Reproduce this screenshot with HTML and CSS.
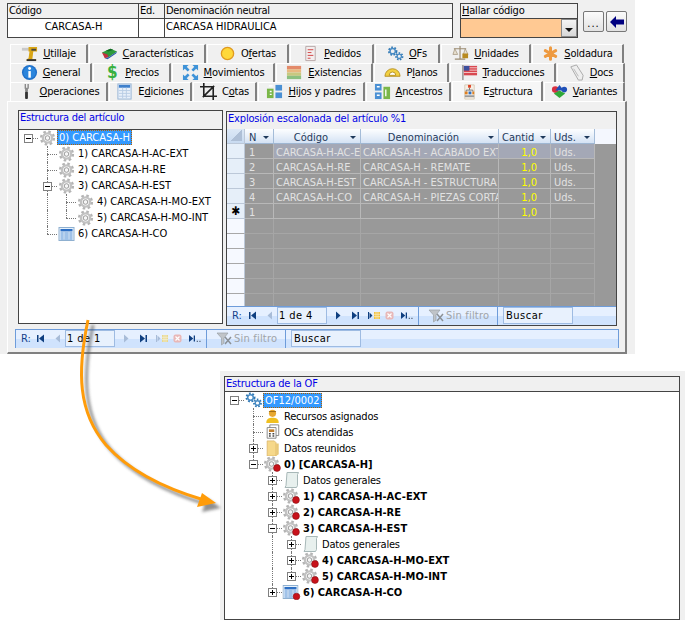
FILE: index.html
```html
<!DOCTYPE html>
<html lang="es">
<head>
<meta charset="utf-8">
<title>Estructura</title>
<link rel="stylesheet" href="styles.css">
</head>
<body>
<svg class="defs" aria-hidden="true">
  <symbol id="gear" viewBox="0 0 16 16">
    <circle cx="8" cy="8" r="6.3" fill="none" stroke="#b4b4b4" stroke-width="2.6" stroke-dasharray="2.5 2.45"/>
    <circle cx="8" cy="8" r="4.6" fill="none" stroke="#c2c2c2" stroke-width="2.4"/>
    <circle cx="8" cy="8" r="2.3" fill="#f6f6f6" stroke="#9a9a9a" stroke-width="1"/>
  </symbol>
  <symbol id="geardot" viewBox="0 0 18 16">
    <use href="#gear" x="0" y="0" width="16" height="16"/>
    <circle cx="13.5" cy="12" r="3.4" fill="#c8111a" stroke="#8e1014" stroke-width=".6"/>
  </symbol>
  <symbol id="table" viewBox="0 0 16 16">
    <rect x=".5" y="1.5" width="15" height="13" fill="#e6f1fb" stroke="#8fb0d0"/>
    <rect x="2" y="3" width="12" height="2.4" fill="#2d6fc4"/>
    <path d="M2 7h12M2 9h12M2 11h12M2 13h12" stroke="#5a93d6"/>
    <path d="M5.5 6v7.500M10.500 6v7.500" stroke="#cfe0f2"/>
  </symbol>
  <symbol id="tabledot" viewBox="0 0 18 16">
    <use href="#table" x="0" y="0" width="16" height="16"/>
    <circle cx="14" cy="12.500" r="3.300" fill="#c8111a" stroke="#8e1014" stroke-width=".6"/>
  </symbol>
  <symbol id="bluegears" viewBox="0 0 18 16">
    <circle cx="6" cy="5.500" r="3.800" fill="none" stroke="#2f78b4" stroke-width="2.400" stroke-dasharray="1.700 1.500"/>
    <circle cx="6" cy="5.500" r="2.800" fill="none" stroke="#4a8cc4" stroke-width="1.500"/>
    <circle cx="13" cy="11" r="3.300" fill="none" stroke="#2f78b4" stroke-width="2.200" stroke-dasharray="1.500 1.400"/>
    <circle cx="13" cy="11" r="2.300" fill="none" stroke="#4a8cc4" stroke-width="1.400"/>
  </symbol>
  <symbol id="paper" viewBox="0 0 16 16">
    <path d="M3.500 .5h11.500l-1 2v11l-1 2H1.500l1-2z" fill="#e8f0ee" stroke="#a8b8b8"/>
  </symbol>
  <symbol id="first" viewBox="0 0 9 9"><path d="M1 1v7h1.500V1zM8 .5L3 4.500l5 4z" fill="#0f3f80"/></symbol>
  <symbol id="prev" viewBox="0 0 9 9"><path d="M7 .5L2.500 4.500 7 8.500z" fill="#a8bcd8"/></symbol>
  <symbol id="next" viewBox="0 0 9 9"><path d="M2 .5L6.500 4.500 2 8.500z" fill="#0f3f80"/></symbol>
  <symbol id="nextoff" viewBox="0 0 9 9"><path d="M2 .5L6.500 4.500 2 8.500z" fill="#a8bcd8"/></symbol>
  <symbol id="last" viewBox="0 0 9 9"><path d="M1 .5l5 4-5 4zM6.500 1v7H8V1z" fill="#0f3f80"/></symbol>
  <symbol id="newrec" viewBox="0 0 12 9"><path d="M0 1v7h1V1zM1.500 1.500l3 3-3 3z" fill="#a8bcd8"/><rect x="6" y="1" width="6" height="7" fill="#e8d890"/><path d="M8 1v7M10 1v7M6 3.300h6M6 5.600h6" stroke="#f4f0d8" stroke-width=".7"/></symbol>
  <symbol id="newrecon" viewBox="0 0 12 9"><path d="M0 1v7h1V1zM1.500 1.500l3 3-3 3z" fill="#0f3f80"/><rect x="6" y="1" width="6" height="7" fill="#f0c040"/><path d="M8 1v7M10 1v7M6 3.300h6M6 5.600h6" stroke="#fbeec0" stroke-width=".7"/></symbol>
  <symbol id="del" viewBox="0 0 9 9"><rect x=".5" y=".5" width="8" height="8" rx="2" fill="#e8b8b8"/><path d="M2.500 2.500l4 4M6.500 2.500l-4 4" stroke="#fff" stroke-width="1.200"/></symbol>
  <symbol id="search" viewBox="0 0 14 9"><path d="M0 .5l5 4-5 4zM5.500 1v7H7V1z" fill="#0f3f80"/><path d="M9 7h1.500v1.500H9zM12 7h1.500v1.500H12z" fill="#5a6a80"/></symbol>
  <symbol id="funnel" viewBox="0 0 18 14"><path d="M1 1h11L8 6v5L5.500 13V6z" fill="#c0c4c8" stroke="#9aa0a6" stroke-width=".7"/><path d="M9 5l6 7M15 5l-6 7" stroke="#8a9096" stroke-width="1.500"/></symbol>
</svg>

<main class="canvas">
  <section class="win win-top">
    <header class="topbar">
      <div class="idbox">
        <div class="idrow idlabels">
          <div class="c-cod">Código</div>
          <div class="c-ed">Ed.</div>
          <div class="c-den">Denominación neutral</div>
        </div>
        <div class="idrow idvalues">
          <div class="c-cod center">CARCASA-H</div>
          <div class="c-ed"></div>
          <div class="c-den">CARCASA HIDRAULICA</div>
        </div>
      </div>
      <div class="findbox">
        <div class="findlabel"><u>H</u>allar código</div>
        <div class="findfield">
          <span class="findinput"></span>
          <span class="combo"><svg width="8" height="4" viewBox="0 0 8 4"><path d="M0 0h8L4 4z" fill="#111"/></svg></span>
        </div>
      </div>
      <button class="btn btn-dots" type="button">...</button>
      <button class="btn" type="button" aria-label="Volver"><svg width="14" height="12" viewBox="0 0 14 12"><path d="M0 6l6-6v3.500h8v5H6V12z" fill="#000080"/></svg></button>
    </header>

    <nav class="tabs">
      <div class="tabrow">
        <a class="tab w-utillaje"><svg class="ti" viewBox="0 0 18 18"><path d="M1 3h9v3H1z" fill="#c9c9c9"/><path d="M8 2h9v5h-4l-1 8h4v2H6v-2l2-1 1-7H8z" fill="#d9a514"/><path d="M6 15h10v2H6z" fill="#333"/><path d="M11 4h5v2h-5z" fill="#444"/></svg><span><u>U</u>tillaje</span></a>
        <a class="tab w-caract"><svg class="ti" viewBox="0 0 18 18"><path d="M1 8l9-4 7 3-9 6z" fill="#2d9a3a"/><path d="M1 8l3 6 4-1-1-3z" fill="#c03040"/><path d="M4 14l4-1 9-6-1 2-9 6z" fill="#2a5aa8"/><path d="M5 6l5-2 3 1-5 2z" fill="#136b24"/></svg><span><u>C</u>aracterísticas</span></a>
        <a class="tab w-ofertas"><svg class="ti" viewBox="0 0 18 18"><circle cx="9" cy="9" r="6.500" fill="#ffd83a" stroke="#e09a20" stroke-width="1.400"/></svg><span>O<u>f</u>ertas</span></a>
        <a class="tab w-pedidos"><svg class="ti" viewBox="0 0 18 18"><path d="M4 1.500h10v15H4z" fill="#f3eeee" stroke="#b8a8a8"/><path d="M6 5h6M6 8h4M6 11h6M6 14h3" stroke="#d04040"/></svg><span><u>P</u>edidos</span></a>
        <a class="tab w-ofs"><svg class="ti" viewBox="0 0 18 16"><use href="#bluegears"/></svg><span><u>O</u>Fs</span></a>
        <a class="tab w-unidades"><svg class="ti" viewBox="0 0 18 18"><path d="M8.500 1v14M3 15h11M2 4h13" stroke="#9a8a70" stroke-width="1.200"/><path d="M3 4L1 10h5zM14 4l-2 6h5z" fill="#e8e0d0" stroke="#9a8a70" stroke-width=".7"/><rect x="11" y="9" width="6" height="5" fill="#b88a20"/></svg><span><u>U</u>nidades</span></a>
        <a class="tab w-soldadura"><svg class="ti" viewBox="0 0 18 18"><path d="M9 9V3M9 9l5.500-3M9 9l5.500 3M9 9v6M9 9l-5.500 3M9 9L3.500 6" stroke="#ee9a40" stroke-width="3.200" stroke-linecap="round"/></svg><span><u>S</u>oldadura</span></a>
      </div>
      <div class="tabrow">
        <a class="tab w-general"><svg class="ti" viewBox="0 0 18 18"><circle cx="9" cy="9" r="8" fill="#1f6fc8"/><circle cx="9" cy="9" r="6.500" fill="#2b85dc"/><rect x="7.800" y="7.500" width="2.600" height="7" fill="#fff"/><circle cx="9.100" cy="4.800" r="1.500" fill="#fff"/></svg><span><u>G</u>eneral</span></a>
        <a class="tab w-precios"><span class="dollar">$</span><span><u>P</u>recios</span></a>
        <a class="tab w-movim"><svg class="ti" viewBox="0 0 18 18"><path d="M1 1h6L5 3l3 3-2 2-3-3-2 2zM17 1v6l-2-2-3 3-2-2 3-3-2-2zM1 17v-6l2 2 3-3 2 2-3 3 2 2zM17 17h-6l2-2-3-3 2-2 3 3 2-2z" fill="#3f93d8"/></svg><span><u>M</u>ovimientos</span></a>
        <a class="tab w-exist"><svg class="ti" viewBox="0 0 18 18"><rect x="1" y="2" width="15" height="3.500" fill="#e38a6a"/><rect x="1" y="5.500" width="15" height="3.500" fill="#e8b880"/><rect x="1" y="9" width="15" height="3.500" fill="#c8c880"/><rect x="1" y="12.500" width="15" height="3.500" fill="#8cc080"/></svg><span><u>E</u>xistencias</span></a>
        <a class="tab w-planos"><svg class="ti" viewBox="0 0 18 18"><path d="M1 13a8 8 0 0 1 16 0z" fill="#f2d040" stroke="#b89020"/><path d="M5.500 12a3.500 3.500 0 0 1 7 0z" fill="#fff" stroke="#b89020"/></svg><span>P<u>l</u>anos</span></a>
        <a class="tab w-traduc"><svg class="ti" viewBox="0 0 18 18"><path d="M2 1v16" stroke="#888" stroke-width="1.400"/><rect x="3" y="2" width="14" height="10" fill="#d84850"/><rect x="3" y="2" width="6" height="5" fill="#3c4f9c"/><path d="M9 4h8M9 6.500h8M3 9h14" stroke="#f4c8c8"/></svg><span><u>T</u>raducciones</span></a>
        <a class="tab w-docs"><svg class="ti" viewBox="0 0 18 18"><path d="M3 3l6-2 7 11-1 5-4 0z" fill="#eeeeee" stroke="#a8a8a8"/><path d="M6 5l5 8" stroke="#b8b8b8"/></svg><span><u>D</u>ocs</span></a>
      </div>
      <div class="tabrow">
        <a class="tab w-oper"><svg class="ti" viewBox="0 0 18 18"><path d="M7 1h1.500v4H10V1h1.500v5H10.500v3h-3V6H7z" fill="#8a8a8a"/><rect x="7.500" y="9" width="3" height="8" rx="1" fill="#333"/></svg><span><u>O</u>peraciones</span></a>
        <a class="tab w-edic"><svg class="ti" viewBox="0 0 18 18"><rect x="2" y="1" width="14" height="16" fill="#e8f0fa" stroke="#98b4d4"/><rect x="3" y="2" width="12" height="3" fill="#3f80cc"/><path d="M3 8h12M3 11h12M3 14h12M7 5v11M11 5v11" stroke="#b8cce4"/></svg><span>E<u>d</u>iciones</span></a>
        <a class="tab w-cotas"><svg class="ti" viewBox="0 0 18 18"><path d="M4 0v14h14M0 4h14v14M3 15L15 3" fill="none" stroke="#222" stroke-width="1.700"/></svg><span>C<u>o</u>tas</span></a>
        <a class="tab w-hijos"><svg class="ti" viewBox="0 0 18 18"><rect x="1" y="6" width="7" height="10" fill="#7ab648"/><rect x="10" y="10" width="7" height="6" fill="#4a90d4"/><rect x="10" y="2" width="7" height="6" fill="#4a90d4"/><path d="M3 3h4M4 9h2M4 12h2" stroke="#fff" stroke-width="1.400"/></svg><span><u>H</u>ijos y padres</span></a>
        <a class="tab w-ances"><svg class="ti" viewBox="0 0 18 18"><rect x="1" y="1" width="7" height="7" fill="#4a90d4"/><rect x="1" y="10" width="7" height="7" fill="#4a90d4"/><rect x="10" y="4" width="7" height="13" fill="#7ab648"/><path d="M3 4h3M3 13h3M12.500 7v7" stroke="#fff" stroke-width="1.400"/></svg><span><u>A</u>ncestros</span></a>
        <a class="tab tab-on w-estru"><svg class="ti" viewBox="0 0 18 18"><path d="M4 2h10v15H4z" fill="#f6efe6" stroke="#d8ccb8"/><rect x="7.500" y="2" width="3" height="3" fill="#e04020"/><rect x="4" y="9" width="3" height="3" fill="#e08020"/><rect x="8" y="9" width="3" height="3" fill="#3070c0"/><rect x="12" y="9" width="2" height="3" fill="#e08020"/><path d="M9 5v2.500M5.500 9V7.500h7V9" fill="none" stroke="#777"/><path d="M4 14h10" stroke="#999" stroke-width="2"/></svg><span>E<u>s</u>tructura</span></a>
        <a class="tab w-vari"><svg class="ti" viewBox="0 0 18 18"><circle cx="4.500" cy="7" r="3.500" fill="#d83040"/><path d="M9 2l4.500 6h-9z" fill="#2050b8"/><circle cx="14" cy="7" r="3" fill="#2050b8"/><path d="M3 11l6-3 6 3-6 5z" fill="#2fa838"/></svg><span><u>V</u>ariantes</span></a>
      </div>
    </nav>

    <div class="page">
      <div class="panels">
        <section class="panel panel-left">
          <h2 class="title">Estructura del artículo</h2>
          <div class="tree">
            <div class="node"><i class="g g-top"><b class="exp minus"></b></i><svg class="ico"><use href="#gear"/></svg><span class="lbl sel">0) CARCASA-H</span></div>
            <div class="node"><i class="g"></i><i class="g g-t"></i><svg class="ico"><use href="#gear"/></svg><span class="lbl">1) CARCASA-H-AC-EXT</span></div>
            <div class="node"><i class="g"></i><i class="g g-t"></i><svg class="ico"><use href="#gear"/></svg><span class="lbl">2) CARCASA-H-RE</span></div>
            <div class="node"><i class="g"></i><i class="g g-t"><b class="exp minus"></b></i><svg class="ico"><use href="#gear"/></svg><span class="lbl">3) CARCASA-H-EST</span></div>
            <div class="node"><i class="g"></i><i class="g g-v"></i><i class="g g-t"></i><svg class="ico"><use href="#gear"/></svg><span class="lbl">4) CARCASA-H-MO-EXT</span></div>
            <div class="node"><i class="g"></i><i class="g g-v"></i><i class="g g-c"></i><svg class="ico"><use href="#gear"/></svg><span class="lbl">5) CARCASA-H-MO-INT</span></div>
            <div class="node"><i class="g"></i><i class="g g-c"></i><svg class="ico"><use href="#table"/></svg><span class="lbl">6) CARCASA-H-CO</span></div>
          </div>
        </section>

        <section class="panel panel-right">
          <h2 class="title title-r">Explosión escalonada del artículo %1</h2>
          <div class="grid">
            <div class="ghead">
              <div class="gs corner"><span class="tri"></span></div>
              <div class="gc c-n">N<span class="dd"></span></div>
              <div class="gc c-c mid">Código<span class="dd"></span></div>
              <div class="gc c-d mid">Denominación<span class="dd"></span></div>
              <div class="gc c-q">Cantid<span class="dd"></span></div>
              <div class="gc c-u">Uds.<span class="dd"></span></div>
            </div>
            <div class="grow cur"><div class="gs"></div><div class="gd c-n">1</div><div class="gd c-c">CARCASA-H-AC-EXT</div><div class="gd c-d">CARCASA-H - ACABADO EXTERIOR</div><div class="gd c-q num">1,0</div><div class="gd c-u">Uds.</div></div>
            <div class="grow"><div class="gs"></div><div class="gd c-n">2</div><div class="gd c-c">CARCASA-H-RE</div><div class="gd c-d">CARCASA-H - REMATE</div><div class="gd c-q num">1,0</div><div class="gd c-u">Uds.</div></div>
            <div class="grow"><div class="gs"></div><div class="gd c-n">3</div><div class="gd c-c">CARCASA-H-EST</div><div class="gd c-d">CARCASA-H - ESTRUCTURA</div><div class="gd c-q num">1,0</div><div class="gd c-u">Uds.</div></div>
            <div class="grow"><div class="gs"></div><div class="gd c-n">4</div><div class="gd c-c">CARCASA-H-CO</div><div class="gd c-d">CARCASA-H - PIEZAS CORTADAS</div><div class="gd c-q num">1,0</div><div class="gd c-u">Uds.</div></div>
            <div class="grow"><div class="gs star">✱</div><div class="gd c-n">1</div><div class="gd c-c"></div><div class="gd c-d"></div><div class="gd c-q num">1,0</div><div class="gd c-u"></div></div>
            <div class="grow empty"><div class="gs"></div><div class="gd c-n"></div><div class="gd c-c"></div><div class="gd c-d"></div><div class="gd c-q"></div><div class="gd c-u"></div></div>
            <div class="grow empty"><div class="gs"></div><div class="gd c-n"></div><div class="gd c-c"></div><div class="gd c-d"></div><div class="gd c-q"></div><div class="gd c-u"></div></div>
            <div class="grow empty"><div class="gs"></div><div class="gd c-n"></div><div class="gd c-c"></div><div class="gd c-d"></div><div class="gd c-q"></div><div class="gd c-u"></div></div>
            <div class="grow empty"><div class="gs"></div><div class="gd c-n"></div><div class="gd c-c"></div><div class="gd c-d"></div><div class="gd c-q"></div><div class="gd c-u"></div></div>
            <div class="grow empty"><div class="gs"></div><div class="gd c-n"></div><div class="gd c-c"></div><div class="gd c-d"></div><div class="gd c-q"></div><div class="gd c-u"></div></div>
            <div class="grow empty"><div class="gs"></div><div class="gd c-n"></div><div class="gd c-c"></div><div class="gd c-d"></div><div class="gd c-q"></div><div class="gd c-u"></div></div>
          </div>
          <div class="navbar navbar-r">
            <span class="nr">R:</span>
            <svg class="nv nv-first"><use href="#first"/></svg>
            <svg class="nv nv-prev"><use href="#prev"/></svg>
            <span class="nbox">1 de 4</span>
            <svg class="nv nv-next"><use href="#next"/></svg>
            <svg class="nv nv-last"><use href="#last"/></svg>
            <svg class="nw nv-new"><use href="#newrecon"/></svg>
            <svg class="nv nv-del"><use href="#del"/></svg>
            <svg class="nw nv-search"><use href="#search"/></svg>
            <span class="nfilter"><svg class="fn"><use href="#funnel"/></svg>Sin filtro</span>
            <span class="nsearch">Buscar</span>
          </div>
        </section>
      </div>
      <div class="navbar navbar-l">
        <span class="nr">R:</span>
        <svg class="nv nv-first"><use href="#first"/></svg>
        <svg class="nv nv-prev"><use href="#prev"/></svg>
        <span class="nbox">1 de 1</span>
        <svg class="nv nv-next"><use href="#nextoff"/></svg>
        <svg class="nv nv-last"><use href="#last"/></svg>
        <svg class="nw nv-new"><use href="#newrec"/></svg>
        <svg class="nv nv-del"><use href="#del"/></svg>
        <svg class="nw nv-search"><use href="#search"/></svg>
        <span class="nfilter"><svg class="fn"><use href="#funnel"/></svg>Sin filtro</span>
        <span class="nsearch">Buscar</span>
      </div>
    </div>
  </section>

  <section class="win win-bottom">
    <h2 class="title title-of">Estructura de la OF</h2>
    <div class="tree">
      <div class="node"><i class="g g-top"><b class="exp minus"></b></i><svg class="ico"><use href="#bluegears"/></svg><span class="lbl sel">OF12/0002</span></div>
      <div class="node"><i class="g"></i><i class="g g-t"></i><svg class="ico" viewBox="0 0 18 18"><circle cx="9" cy="6" r="4" fill="#e8a830"/><path d="M2 17c0-5 3-6 7-6s7 1 7 6z" fill="#f0c020"/><path d="M5 4h8" stroke="#906010"/></svg><span class="lbl lc">Recursos asignados</span></div>
      <div class="node"><i class="g"></i><i class="g g-t"></i><svg class="ico" viewBox="0 0 18 18"><path d="M6 1h10v12H6z" fill="#fff" stroke="#808080"/><path d="M3 4h10v12H3z" fill="#fff" stroke="#808080"/><rect x="5" y="6" width="6" height="3" fill="#c08030"/><path d="M5 11h2M9 11h2M5 13.500h2M9 13.500h2" stroke="#444" stroke-width="1.500"/></svg><span class="lbl lc">OCs atendidas</span></div>
      <div class="node"><i class="g"></i><i class="g g-t"><b class="exp plus"></b></i><svg class="ico" viewBox="0 0 18 18"><path d="M3 1h8l2 2v15H3z" fill="#f6d88a" stroke="#d8b060" stroke-width=".8"/><path d="M13 4h3v12l-3 2z" fill="#e8c878"/></svg><span class="lbl lc">Datos reunidos</span></div>
      <div class="node"><i class="g"></i><i class="g g-c"><b class="exp minus"></b></i><svg class="ico"><use href="#geardot"/></svg><span class="lbl strong">0) [CARCASA-H]</span></div>
      <div class="node"><i class="g"></i><i class="g"></i><i class="g g-t"><b class="exp plus"></b></i><svg class="ico"><use href="#paper"/></svg><span class="lbl lc">Datos generales</span></div>
      <div class="node"><i class="g"></i><i class="g"></i><i class="g g-t"><b class="exp plus"></b></i><svg class="ico"><use href="#geardot"/></svg><span class="lbl strong">1) CARCASA-H-AC-EXT</span></div>
      <div class="node"><i class="g"></i><i class="g"></i><i class="g g-t"><b class="exp plus"></b></i><svg class="ico"><use href="#geardot"/></svg><span class="lbl strong">2) CARCASA-H-RE</span></div>
      <div class="node"><i class="g"></i><i class="g"></i><i class="g g-t"><b class="exp minus"></b></i><svg class="ico"><use href="#geardot"/></svg><span class="lbl strong">3) CARCASA-H-EST</span></div>
      <div class="node"><i class="g"></i><i class="g"></i><i class="g g-v"></i><i class="g g-t"><b class="exp plus"></b></i><svg class="ico"><use href="#paper"/></svg><span class="lbl lc">Datos generales</span></div>
      <div class="node"><i class="g"></i><i class="g"></i><i class="g g-v"></i><i class="g g-t"><b class="exp plus"></b></i><svg class="ico"><use href="#geardot"/></svg><span class="lbl strong">4) CARCASA-H-MO-EXT</span></div>
      <div class="node"><i class="g"></i><i class="g"></i><i class="g g-v"></i><i class="g g-c"><b class="exp plus"></b></i><svg class="ico"><use href="#geardot"/></svg><span class="lbl strong">5) CARCASA-H-MO-INT</span></div>
      <div class="node"><i class="g"></i><i class="g"></i><i class="g g-c"><b class="exp plus"></b></i><svg class="ico"><use href="#tabledot"/></svg><span class="lbl strong">6) CARCASA-H-CO</span></div>
    </div>
  </section>

  <svg class="arrow" viewBox="0 0 687 620" aria-hidden="true">
    <defs>
      <filter id="soft" x="-20%" y="-20%" width="140%" height="140%"><feGaussianBlur stdDeviation="1.800"/></filter>
    </defs>
    <g transform="translate(5 5)" filter="url(#soft)" opacity=".65">
      <path d="M88 320C77 372 78 412 106 445 132 474 170 490 204 500" fill="none" stroke="#555" stroke-width="3"/>
      <path d="M216 503L202 493 197 507z" fill="#555"/>
    </g>
    <path d="M88 320C77 372 78 412 106 445 132 474 170 490 204 500" fill="none" stroke="#ff9c0a" stroke-width="3"/>
    <path d="M216 503L202 493 197 507z" fill="#ff9c0a"/>
  </svg>
</main>
</body>
</html>
```
FILE: styles.css
```css
* { box-sizing: border-box; }
html, body { margin: 0; padding: 0; background: #fff; }
body {
  font-family: "DejaVu Sans", "Liberation Sans", sans-serif;
  font-stretch: condensed;
  font-size: 11px;
  color: #000;
}
u { text-underline-offset: 1px; }
.defs { display: block; width: 0; height: 0; overflow: hidden; }
.canvas { position: relative; width: 687px; height: 620px; overflow: hidden; background: #fff; }
.win { position: absolute; background: #f0f0f0; }
.win-top { left: 0; top: 0; width: 635px; height: 354px; padding: 3px 0 0 7px; display: flex; flex-direction: column; }
.win-bottom { left: 220px; top: 371px; width: 465px; height: 249px; padding: 5px 5px 0 4px; display: flex; flex-direction: column; }

/* top bar */
.topbar { display: flex; align-items: flex-start; height: 41px; }
.idbox { width: 446px; height: 35px; border: 1px solid #444; background: #fff; }
.idrow { display: flex; }
.idlabels { height: 14px; background: #f0f0f0; border-bottom: 1px solid #444; box-sizing: content-box; line-height: 14px; letter-spacing: -.3px; }
.idvalues { height: 19px; line-height: 15px; }
.c-cod { width: 131px; padding-left: 1px; border-right: 1px solid #444; }
.c-ed { width: 26px; padding-left: 1px; border-right: 1px solid #444; }
.c-den { flex: 1; padding-left: 1px; }
.center { text-align: center; }
.findbox { width: 118px; height: 35px; margin-left: 7px; border: 1px solid #444; background: #f0f0f0; }
.findlabel { height: 15px; border-bottom: 1px solid #444; padding-left: 1px; line-height: 14px; letter-spacing: -.2px; }
.findfield { display: flex; height: 18px; }
.findinput { flex: 1; background: #ffc993; }
.combo { width: 16px; display: flex; align-items: center; justify-content: center; background: linear-gradient(#f4f4f4, #d8d8d8); border: 1px solid #8a8a8a; padding-top: 3px; }
.btn { width: 21px; height: 21px; margin: 8px 0 0 5px; padding: 0; display: flex; align-items: center; justify-content: center; border: 1px solid #777; border-radius: 2px; background: linear-gradient(#fbfbfb, #e2e2e2); font: inherit; }
.btn-dots { align-items: flex-end; line-height: 14px; letter-spacing: 1px; }
.btn + .btn { margin-left: 2px; }

/* tabs */
.tabs { margin-left: 3px; display: flex; flex-direction: column; }
.tabrow { display: flex; gap: 1px; height: 19px; }
.tab { display: flex; align-items: center; justify-content: center; gap: 5px; height: 19px; background: #f0f0f0; border-top: 1px solid #fff; border-left: 1px solid #fff; border-right: 2px solid #808080; white-space: nowrap; color: #000; letter-spacing: -.2px; }
.tab-on { height: 20px; margin-top: -1px; background: #f6f6f6; border-right-color: #808080; position: relative; z-index: 1; }
.ti { width: 17px; height: 17px; flex: none; }
.dollar { width: 16px; font-size: 17px; font-weight: bold; color: #38b040; text-align: center; line-height: 17px; }
.w-utillaje { width: 78px; } .w-caract { width: 117px; } .w-ofertas { width: 82px; } .w-pedidos { width: 84px; } .w-ofs { width: 65px; } .w-unidades { width: 90px; } .w-soldadura { width: 92px; }
.w-general { width: 82px; } .w-precios { width: 78px; } .w-movim { width: 103px; } .w-exist { width: 97px; } .w-planos { width: 75px; } .w-traduc { width: 106px; } .w-docs { width: 68px; }
.w-oper { width: 98px; } .w-edic { width: 83px; } .w-cotas { width: 64px; } .w-hijos { width: 107px; } .w-ances { width: 85px; } .w-estru { width: 91px; } .w-vari { width: 81px; }

/* page */
.page { width: 620px; height: 254px; border-top: 1px solid #fff; border-left: 1px solid #fff; border-right: 2px solid #808080; border-bottom: 2px solid #808080; padding: 8px 0 0 10px; }
.panels { display: flex; gap: 3px; height: 215px; }
.panel { display: flex; flex-direction: column; }
.panel-left { width: 205px; height: 214px; }
.panel-right { width: 391px; margin-top: 1px; border: 1px solid #444; height: 215px; }
.title { margin: 0; height: 19px; padding-left: 1px; font-size: 11px; font-weight: normal; color: #0000e6; line-height: 14px; letter-spacing: -.25px; background: #f0f0f0; border: 1px solid #444; border-bottom: 0; flex: none; }
.title-r { border: 0; height: 17px; padding-left: 1px; letter-spacing: -.17px; }
.title-of { height: 15px; line-height: 13px; letter-spacing: -.2px; }
.tree { flex: 1; background: #fff; border: 1px solid #444; }
.node { display: flex; align-items: center; height: 16px; white-space: nowrap; }
.ico { width: 19px; height: 16px; flex: none; }
.lbl { padding: 0 2px; line-height: 15px; height: 15px; }
.lc { letter-spacing: -.2px; }
.strong { font-weight: bold; }
.sel { background: #3399ff; color: #fff; outline: 1px dotted #b06000; outline-offset: -1px; }

/* tree guides */
.g { position: relative; width: 19px; height: 16px; flex: none; display: block; }
.g::before, .g::after { content: ""; position: absolute; }
.g-t::before, .g-v::before { left: 9px; top: 0; height: 16px; border-left: 1px dotted #777; }
.g-c::before { left: 9px; top: 0; height: 8px; border-left: 1px dotted #777; }
.g-t::after, .g-c::after, .g-top::after { left: 9px; top: 8px; width: 10px; border-top: 1px dotted #777; }
.exp { position: absolute; z-index: 1; left: 5px; top: 4px; width: 9px; height: 9px; border: 1px solid #808080; background: #fff; }
.exp::before { content: ""; position: absolute; left: 1px; top: 3px; width: 5px; height: 1px; background: #000; }
.plus::after { content: ""; position: absolute; left: 3px; top: 1px; width: 1px; height: 5px; background: #000; }

/* grid */
.grid { flex: 1; background: #999; overflow: hidden; }
.ghead { display: flex; height: 15px; background: #f4f7fe; color: #1e395b; }
.grow { display: flex; height: 15px; color: #e2e2e2; }
.gs { width: 18px; flex: none; height: 15px; background: #e6eff9; border-right: 1px solid #bcc8d8; border-bottom: 1px solid #bcc8d8; }
.empty .gs { background: #f6f9ff; border-bottom-color: #a8a8a8; }
.corner { background: linear-gradient(#dce8f6, #c8daf0); display: flex; align-items: flex-end; justify-content: flex-end; padding: 2px; }
.tri { width: 12px; height: 11px; background: linear-gradient(to bottom right, transparent 50%, #aebfd6 50%); }
.star { font-size: 12px; line-height: 14px; text-align: center; color: #000; }
.gc, .gd { flex: none; height: 15px; border-right: 1px solid #b8b8b8; border-bottom: 1px solid #b8b8b8; padding-left: 3px; overflow: hidden; white-space: nowrap; line-height: 18px; }
.gc { position: relative; background: linear-gradient(#fdfeff, #d4e2f4); border-right-color: #a4bcd8; border-bottom-color: #9eb6d2; }
.mid { text-align: center; padding-right: 14px; }
.empty .gd { border-color: #a6a6a6; }
.cur .gd:not(.c-n) { background: #a4a8b6; }
.c-n { width: 29px; padding-left: 4px; }
.c-c { width: 87px; padding-left: 2px; }
.c-d { width: 138px; padding-left: 2px; }
.c-q { width: 52px; }
.c-u { width: 44px; }
.num { color: #ffff00; text-align: right; padding-right: 13px; }
.dd { position: absolute; right: 4px; top: 7px; width: 0; height: 0; border-left: 3px solid transparent; border-right: 3px solid transparent; border-top: 3px solid #1e395b; }

/* nav bars */
.navbar { display: flex; align-items: center; height: 19px; flex: none; color: #15428b; background: linear-gradient(#e6f0ff 50%, #d0e3fd 50%); border-top: 1px solid #6e9cda; border-left: 1px solid #6e9cda; border-right: 1px solid #6e9cda; white-space: nowrap; }
.navbar-r { border-left: 0; border-right: 0; }
.navbar-l { margin: 4px 0 0 -3px; width: 604px; }
.nr { width: 21px; padding-left: 5px; flex: none; }
.navbar-l .nr { width: 20px; }
.nv { width: 9px; height: 9px; flex: none; }
.nw { width: 12px; height: 9px; flex: none; }
.nv-prev { margin-left: 8px; }
.nbox { width: 50px; height: 17px; margin-left: 3px; padding-left: 1px; background: #e8f1fd; border: 1px solid #9ebbe2; color: #000; line-height: 15px; letter-spacing: .4px; }
.nv-next { margin-left: 7px; }
.nv-last { margin-left: 8px; }
.nv-new { margin-left: 8px; }
.nv-del { margin-left: 5px; }
.nv-search { margin-left: 7px; }
.nfilter { display: flex; align-items: center; width: 80px; height: 18px; margin-left: 5px; padding-left: 9px; border-left: 1px solid #6e9cda; border-right: 1px solid #6e9cda; color: #a0a4a8; letter-spacing: .2px; }
.fn { width: 18px; height: 14px; flex: none; }
.nsearch { width: 70px; height: 17px; margin-left: 5px; padding-left: 2px; background: #e8f1fd; border: 1px solid #9ebbe2; color: #000; line-height: 15px; letter-spacing: .5px; }

/* arrow */
.arrow { position: absolute; left: 0; top: 0; width: 687px; height: 620px; pointer-events: none; }
```
